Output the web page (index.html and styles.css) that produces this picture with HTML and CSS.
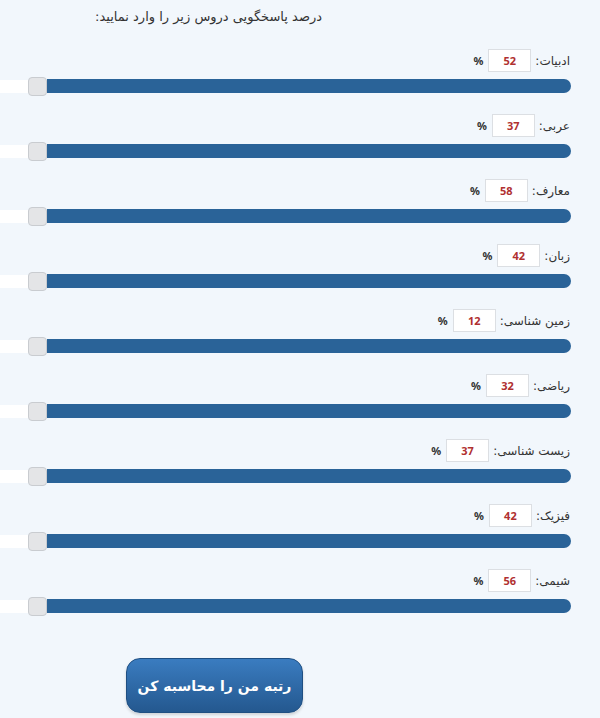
FILE: index.html
```html
<!DOCTYPE html>
<html lang="fa" dir="rtl">
<head>
<meta charset="utf-8">
<link rel="stylesheet" href="styles.css">
</head>
<body>
<div class="page">
  <div class="title">درصد پاسخگویی دروس زیر را وارد نمایید:</div>
  <div class="rows">
    <div class="row"><div class="line"><span class="label">ادبیات:</span><span class="box">52</span><span class="pct">%</span></div><div class="slider"><span class="fill"></span><span class="thumb"></span><span class="rest"></span></div></div>
    <div class="row"><div class="line"><span class="label">عربی:</span><span class="box">37</span><span class="pct">%</span></div><div class="slider"><span class="fill"></span><span class="thumb"></span><span class="rest"></span></div></div>
    <div class="row"><div class="line"><span class="label">معارف:</span><span class="box">58</span><span class="pct">%</span></div><div class="slider"><span class="fill"></span><span class="thumb"></span><span class="rest"></span></div></div>
    <div class="row"><div class="line"><span class="label">زبان:</span><span class="box">42</span><span class="pct">%</span></div><div class="slider"><span class="fill"></span><span class="thumb"></span><span class="rest"></span></div></div>
    <div class="row"><div class="line"><span class="label">زمین شناسی:</span><span class="box">12</span><span class="pct">%</span></div><div class="slider"><span class="fill"></span><span class="thumb"></span><span class="rest"></span></div></div>
    <div class="row"><div class="line"><span class="label">ریاضی:</span><span class="box">32</span><span class="pct">%</span></div><div class="slider"><span class="fill"></span><span class="thumb"></span><span class="rest"></span></div></div>
    <div class="row"><div class="line"><span class="label">زیست شناسی:</span><span class="box">37</span><span class="pct">%</span></div><div class="slider"><span class="fill"></span><span class="thumb"></span><span class="rest"></span></div></div>
    <div class="row"><div class="line"><span class="label">فیزیک:</span><span class="box">42</span><span class="pct">%</span></div><div class="slider"><span class="fill"></span><span class="thumb"></span><span class="rest"></span></div></div>
    <div class="row"><div class="line"><span class="label">شیمی:</span><span class="box">56</span><span class="pct">%</span></div><div class="slider"><span class="fill"></span><span class="thumb"></span><span class="rest"></span></div></div>
  </div>
  <div class="actions"><button class="btn">رتبه من را محاسبه کن</button></div>
</div>
</body>
</html>
```
FILE: styles.css
```css
html, body {
  margin: 0;
  padding: 0;
  background: #f2f7fc;
}
body {
  font-family: "DejaVu Sans", "Noto Sans", sans-serif;
  color: #333;
  direction: rtl;
  width: 600px;
  height: 718px;
  overflow: hidden;
}
.page {
  display: flex;
  flex-direction: column;
}
.title {
  height: 49px;
  box-sizing: border-box;
  padding-top: 9px;
  padding-right: 278px;
  font-size: 13px;
  line-height: 16px;
  white-space: nowrap;
}
.rows {
  display: flex;
  flex-direction: column;
}
.row {
  height: 65px;
  display: flex;
  flex-direction: column;
}
.line {
  display: flex;
  align-items: center;
  height: 23px;
  padding-right: 30px;
}
.label {
  font-size: 12px;
  margin-left: 4px;
}
.box {
  width: 43px;
  height: 23px;
  box-sizing: border-box;
  background: #fff;
  border: 1px solid #dcdfe3;
  display: flex;
  align-items: center;
  justify-content: center;
  font-size: 11px;
  font-weight: bold;
  color: #b03030;
  font-family: "Noto Sans", "DejaVu Sans", sans-serif;
}
.pct {
  font-size: 11px;
  font-weight: bold;
  margin-right: 5px;
  font-family: "Noto Sans", "DejaVu Sans", sans-serif;
}
.slider {
  margin-top: 4px;
  width: 571px;
  height: 20px;
  display: flex;
  direction: ltr;
  align-items: center;
  align-self: flex-end;
}
.fill {
  width: 28px;
  height: 13px;
  background: #fff;
}
.thumb {
  width: 19px;
  height: 19px;
  box-sizing: border-box;
  background: #e4e5e7;
  border: 1px solid #c9ccd0;
  border-radius: 4px;
}
.rest {
  flex: 1;
  height: 14px;
  background: #2a6398;
  border-radius: 0 7px 7px 0;
}
.actions {
  padding-top: 24px;
  padding-left: 126px;
  direction: ltr;
  display: flex;
}
.btn {
  width: 177px;
  height: 55px;
  padding: 0;
  border: 1px solid #1f4f82;
  border-radius: 14px;
  background: linear-gradient(to bottom, #3a7cc0, #24588f);
  color: #fff;
  font-family: "DejaVu Sans", sans-serif;
  font-weight: bold;
  font-size: 14px;
  white-space: nowrap;
  direction: rtl;
  box-shadow: 0 2px 3px rgba(0,0,0,0.15);
}
```
